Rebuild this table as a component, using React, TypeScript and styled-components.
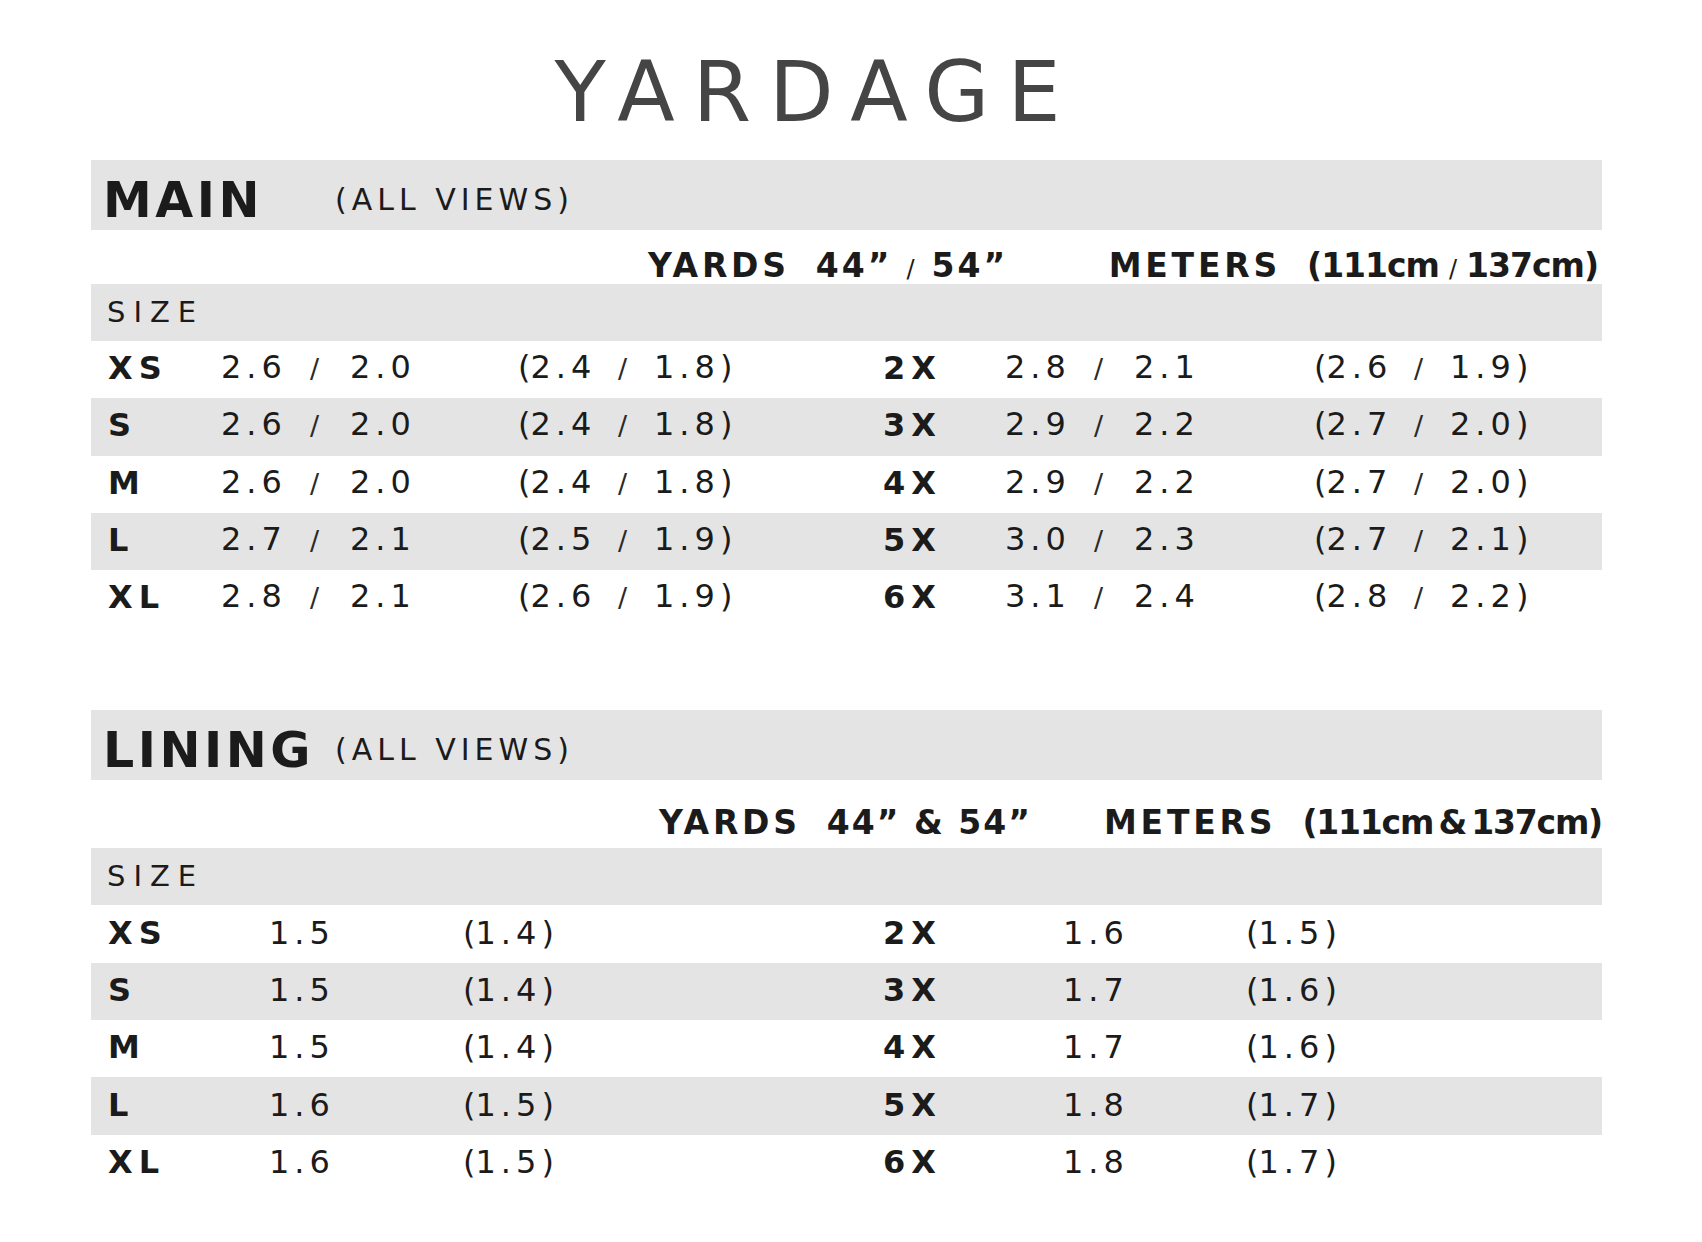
import React from "react";
import styled, { createGlobalStyle } from "styled-components";

const GlobalStyle = createGlobalStyle`
  html, body { margin: 0; padding: 0; background: #ffffff; }
  body {
    font-family: "DejaVu Sans", "Liberation Sans", sans-serif;
    color: #1b1b1b;
  }
`;

const BAND = "#e4e4e4";

const Page = styled.div`
  width: 1702px;
  min-height: 1242px;
  box-sizing: border-box;
  padding: 49px 100px 0 91px;
`;

const Title = styled.h1`
  margin: 0;
  padding-right: 60px;
  text-align: center;
  font-size: 84px;
  line-height: 86px;
  font-weight: 400;
  letter-spacing: 18px;
  color: #454545;
`;

const Section = styled.section<{ $top: number }>`
  margin-top: ${(p) => p.$top}px;
`;

const Band = styled.div`
  height: 70px;
  box-sizing: border-box;
  padding: 10px 0 0 12px;
  display: flex;
  align-items: center;
  background: ${BAND};
`;

const BandTitle = styled.span`
  width: 232px;
  font-size: 49px;
  line-height: 49px;
  font-weight: 700;
  letter-spacing: 3.5px;
`;

const BandNote = styled.span`
  font-size: 30px;
  line-height: 30px;
  letter-spacing: 5px;
`;

const HeaderRow = styled.div<{ $h: number; $left: number; $right: number }>`
  height: ${(p) => p.$h}px;
  box-sizing: border-box;
  padding: 18px ${(p) => p.$right}px 0 ${(p) => p.$left}px;
  display: grid;
  grid-template-columns: 1fr auto;
  align-items: center;
`;

const HeadGroup = styled.div`
  display: flex;
  align-items: baseline;
  gap: 26px;
  font-size: 33px;
  line-height: 36px;
  font-weight: 700;
  white-space: nowrap;
`;

const HeadLabel = styled.span`
  letter-spacing: 3.8px;
`;

const HeadValue = styled.span<{ $spacing: number; $words?: number }>`
  letter-spacing: ${(p) => p.$spacing}px;
  word-spacing: ${(p) => p.$words ?? 0}px;
`;

const HeadSlash = styled.span<{ $gap: number }>`
  font-size: 24px;
  font-weight: 400;
  margin: 0 ${(p) => p.$gap}px;
`;

const SizeBand = styled.div`
  height: 57px;
  box-sizing: border-box;
  padding-left: 16px;
  display: flex;
  align-items: center;
  background: ${BAND};
`;

const SizeLabel = styled.span`
  font-size: 29px;
  line-height: 29px;
  letter-spacing: 8px;
`;

const DataRow = styled.div<{ $shade: boolean; $cols: string }>`
  height: 57.3px;
  box-sizing: border-box;
  padding: 0 0 3px 17px;
  display: grid;
  grid-template-columns: ${(p) => p.$cols};
  align-items: center;
  background: ${(p) => (p.$shade ? BAND : "transparent")};
  font-size: 32px;
  line-height: 36px;
  white-space: nowrap;
`;

const SizeCell = styled.span`
  font-weight: 700;
  letter-spacing: 6px;
`;

const Pair = styled.div<{ $cols: string }>`
  display: grid;
  grid-template-columns: ${(p) => p.$cols};
  align-items: baseline;
`;

const Value = styled.span``;

const Num = styled.span`
  letter-spacing: 5px;
`;

const Paren = styled.span``;

const Slash = styled.span`
  font-size: 27px;
  color: #2a2a2a;
`;

type Half = { size: string; y: [string, string]; m: [string, string] };
type Single = { size: string; y: string; m: string };

const MAIN_COLS = "113px 297px 365px 122px 309px 1fr";
const LINING_COLS = "161px 194px 420px 180px 183px 1fr";
const YARD_PAIR = "89px 40px auto";
const METER_PAIR = "100px 36px auto";

const mainRows: [Half, Half][] = [
  [
    { size: "XS", y: ["2.6", "2.0"], m: ["2.4", "1.8"] },
    { size: "2X", y: ["2.8", "2.1"], m: ["2.6", "1.9"] },
  ],
  [
    { size: "S", y: ["2.6", "2.0"], m: ["2.4", "1.8"] },
    { size: "3X", y: ["2.9", "2.2"], m: ["2.7", "2.0"] },
  ],
  [
    { size: "M", y: ["2.6", "2.0"], m: ["2.4", "1.8"] },
    { size: "4X", y: ["2.9", "2.2"], m: ["2.7", "2.0"] },
  ],
  [
    { size: "L", y: ["2.7", "2.1"], m: ["2.5", "1.9"] },
    { size: "5X", y: ["3.0", "2.3"], m: ["2.7", "2.1"] },
  ],
  [
    { size: "XL", y: ["2.8", "2.1"], m: ["2.6", "1.9"] },
    { size: "6X", y: ["3.1", "2.4"], m: ["2.8", "2.2"] },
  ],
];

const liningRows: [Single, Single][] = [
  [
    { size: "XS", y: "1.5", m: "1.4" },
    { size: "2X", y: "1.6", m: "1.5" },
  ],
  [
    { size: "S", y: "1.5", m: "1.4" },
    { size: "3X", y: "1.7", m: "1.6" },
  ],
  [
    { size: "M", y: "1.5", m: "1.4" },
    { size: "4X", y: "1.7", m: "1.6" },
  ],
  [
    { size: "L", y: "1.6", m: "1.5" },
    { size: "5X", y: "1.8", m: "1.7" },
  ],
  [
    { size: "XL", y: "1.6", m: "1.5" },
    { size: "6X", y: "1.8", m: "1.7" },
  ],
];

function HalfCells({ h }: { h: Half }) {
  return (
    <>
      <SizeCell>{h.size}</SizeCell>
      <Pair $cols={YARD_PAIR}>
        <Value>
          <Num>{h.y[0]}</Num>
        </Value>
        <Slash>/</Slash>
        <Value>
          <Num>{h.y[1]}</Num>
        </Value>
      </Pair>
      <Pair $cols={METER_PAIR}>
        <Value>
          <Paren>(</Paren>
          <Num>{h.m[0]}</Num>
        </Value>
        <Slash>/</Slash>
        <Value>
          <Num>{h.m[1]}</Num>
          <Paren>)</Paren>
        </Value>
      </Pair>
    </>
  );
}

function SingleCells({ s }: { s: Single }) {
  return (
    <>
      <SizeCell>{s.size}</SizeCell>
      <Value>
        <Num>{s.y}</Num>
      </Value>
      <Value>
        <Paren>(</Paren>
        <Num>{s.m}</Num>
        <Paren>)</Paren>
      </Value>
    </>
  );
}

export default function App() {
  return (
    <>
      <GlobalStyle />
      <Page>
        <Title>YARDAGE</Title>

        <Section $top={25}>
          <Band>
            <BandTitle>MAIN</BandTitle>
            <BandNote>(ALL VIEWS)</BandNote>
          </Band>
          <HeaderRow $h={54} $left={557} $right={4}>
            <HeadGroup>
              <HeadLabel>YARDS</HeadLabel>
              <HeadValue $spacing={3}>
                44”<HeadSlash $gap={14}>/</HeadSlash>54”
              </HeadValue>
            </HeadGroup>
            <HeadGroup>
              <HeadLabel>METERS</HeadLabel>
              <HeadValue $spacing={-1}>
                (111cm<HeadSlash $gap={10}>/</HeadSlash>137cm)
              </HeadValue>
            </HeadGroup>
          </HeaderRow>
          <SizeBand>
            <SizeLabel>SIZE</SizeLabel>
          </SizeBand>
          {mainRows.map(([l, r], i) => (
            <DataRow key={l.size} $shade={i % 2 === 1} $cols={MAIN_COLS}>
              <HalfCells h={l} />
              <HalfCells h={r} />
            </DataRow>
          ))}
        </Section>

        <Section $top={83}>
          <Band>
            <BandTitle>LINING</BandTitle>
            <BandNote>(ALL VIEWS)</BandNote>
          </Band>
          <HeaderRow $h={68} $left={568} $right={0}>
            <HeadGroup>
              <HeadLabel>YARDS</HeadLabel>
              <HeadValue $spacing={2}>44” &amp; 54”</HeadValue>
            </HeadGroup>
            <HeadGroup>
              <HeadLabel>METERS</HeadLabel>
              <HeadValue $spacing={-1.2} $words={-5}>
                (111cm &amp; 137cm)
              </HeadValue>
            </HeadGroup>
          </HeaderRow>
          <SizeBand>
            <SizeLabel>SIZE</SizeLabel>
          </SizeBand>
          {liningRows.map(([l, r], i) => (
            <DataRow key={l.size} $shade={i % 2 === 1} $cols={LINING_COLS}>
              <SingleCells s={l} />
              <SingleCells s={r} />
            </DataRow>
          ))}
        </Section>
      </Page>
    </>
  );
}
